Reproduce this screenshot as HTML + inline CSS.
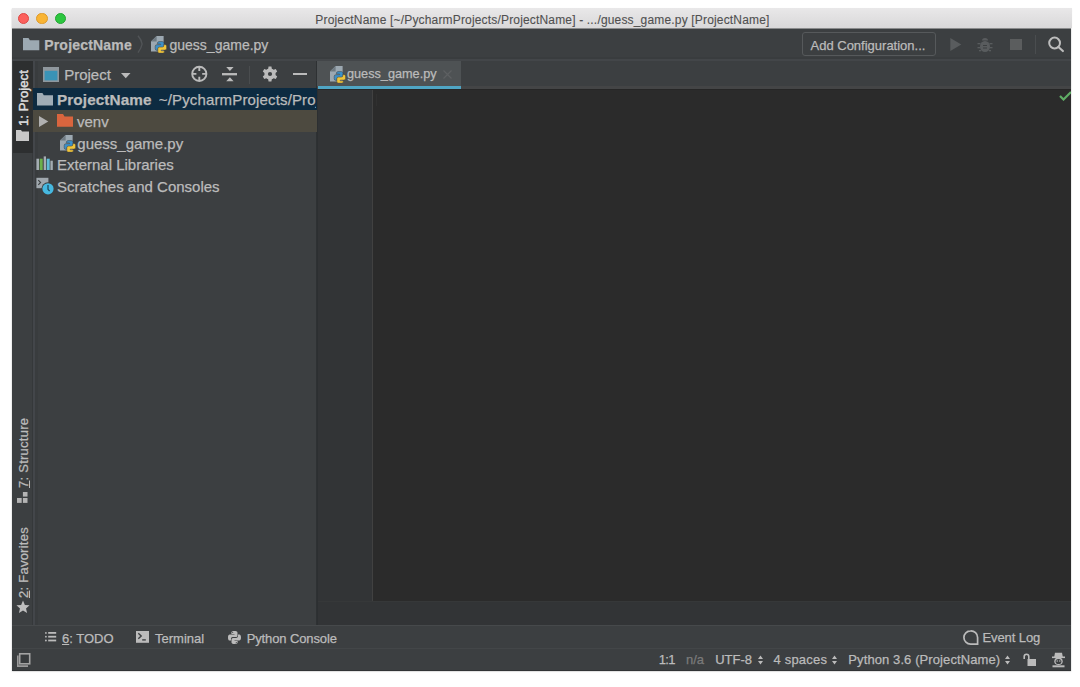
<!DOCTYPE html>
<html><head><meta charset="utf-8">
<style>
*{box-sizing:border-box;margin:0;padding:0}
html,body{width:1080px;height:687px;background:#fff;overflow:hidden;font-family:"Liberation Sans",sans-serif;position:relative}
.a{position:absolute}
.t{position:absolute;white-space:nowrap;color:#bbbbbb;-webkit-text-stroke:0.25px currentColor}
.s13{font-size:13px;line-height:15px}
.s15{font-size:15px;line-height:17px}
.s14{font-size:14px;line-height:16px}
svg{position:absolute;overflow:visible}
</style></head><body>
<svg width="0" height="0" style="position:absolute"><defs><symbol id="py" viewBox="0 0 16 17"><path d="M5.6 0H12.6V15.6H0V5.6Z" fill="#9ca8b1"/><path d="M0 5.6L5.6 0V5.6Z" fill="#6f7a82"/><path d="M8 5.6h3.3a1.7 1.7 0 0 1 1.7 1.7V10a1.7 1.7 0 0 1-1.7 1.7H8.6a1.7 1.7 0 0 0-1.7 1.7V14.4H5.9A1.7 1.7 0 0 1 4.2 12.7V10.4A1.7 1.7 0 0 1 5.9 8.7H9.6V8H6.4V7.3A1.7 1.7 0 0 1 8 5.6Z" fill="#3d90c8" stroke="#3c3f41" stroke-width="0.5"/><path transform="rotate(180 9.9 11.4)" d="M8 5.6h3.3a1.7 1.7 0 0 1 1.7 1.7V10a1.7 1.7 0 0 1-1.7 1.7H8.6a1.7 1.7 0 0 0-1.7 1.7V14.4H5.9A1.7 1.7 0 0 1 4.2 12.7V10.4A1.7 1.7 0 0 1 5.9 8.7H9.6V8H6.4V7.3A1.7 1.7 0 0 1 8 5.6Z" fill="#f0c53a" stroke="#3c3f41" stroke-width="0.5"/></symbol></defs></svg>
<!-- window frame -->
<div class="a" style="left:12px;top:8px;width:1058.7px;height:663px;background:#3c3f41;box-shadow:0 0.5px 1.5px rgba(0,0,0,.3)"></div>
<!-- title bar -->
<div class="a" style="left:11.5px;top:7.9px;width:1060.3px;height:20.1px;background:linear-gradient(#e9e8e9,#d9d8d9);box-shadow:0 0 0.6px rgba(0,0,0,.12)"></div>
<div class="a" style="left:18.3px;top:13.2px;width:11.2px;height:11.2px;border-radius:50%;background:#fc605c;border:0.5px solid #df4744"></div>
<div class="a" style="left:36.4px;top:13.2px;width:11.2px;height:11.2px;border-radius:50%;background:#f9b434;border:0.5px solid #de9a2a"></div>
<div class="a" style="left:54.5px;top:13.2px;width:11.2px;height:11.2px;border-radius:50%;background:#2cc63f;border:0.6px solid #23a532"></div>
<div class="t" style="left:315.3px;top:12.9px;font-size:12px;line-height:14px;letter-spacing:0.17px;color:#505050;-webkit-text-stroke:0.1px #505050">ProjectName [~/PycharmProjects/ProjectName] - .../guess_game.py [ProjectName]</div>

<!-- breadcrumb bar -->
<div class="a" style="left:12px;top:28px;width:1058.7px;height:33px;background:#3c3f41"></div><div class="a" style="left:12px;top:28px;width:1058.7px;height:1px;background:#8a8b8c"></div><div class="a" style="left:12px;top:57px;width:1058.7px;height:1.8px;background:#393c3e"></div><div class="a" style="left:12px;top:58.9px;width:1058.7px;height:2.1px;background:#434649"></div>
<svg style="left:22.9px;top:37.9px" width="16.3" height="12.2" viewBox="0 0 16.3 12.2"><path d="M0 0H5.5L6.9 2.2H16.3V12.2H0Z" fill="#9ca9b2"/></svg>
<div class="t s14" style="left:44.2px;top:36.5px;font-weight:bold;letter-spacing:0.2px">ProjectName</div>
<svg style="left:136.5px;top:35px" width="7" height="18" viewBox="0 0 7 18"><path d="M1 0.8Q4.5 5 5.1 9Q4.5 13 1 17.6" fill="none" stroke="#515457" stroke-width="1.4"/></svg>
<svg style="left:151px;top:35.5px" width="16" height="17"><use href="#py"/></svg>
<div class="t s14" style="left:169.5px;top:36.5px">guess_game.py</div>

<!-- Add configuration + run icons -->
<div class="a" style="left:802px;top:32px;width:133.5px;height:24px;border:1.5px solid #56595b;border-radius:3px;background:#3c3f41"></div>
<div class="t s13" style="left:810.5px;top:37.5px">Add Configuration...</div>
<svg style="left:950px;top:38px" width="11.5" height="13" viewBox="0 0 11.5 13"><path d="M0.3 0L11.3 6.5L0.3 13Z" fill="#595c5e"/></svg>
<svg style="left:977px;top:36.5px" width="16" height="16" viewBox="0 0 16 16"><g fill="#595c5e"><ellipse cx="8" cy="9.5" rx="5" ry="5.5"/><path d="M5 3.5a3 2.5 0 0 1 6 0z"/><rect x="0.5" y="6" width="3" height="1.3"/><rect x="12.5" y="6" width="3" height="1.3"/><rect x="0.5" y="10" width="3" height="1.3"/><rect x="12.5" y="10" width="3" height="1.3"/><rect x="2" y="13" width="2" height="1.3"/><rect x="12" y="13" width="2" height="1.3"/></g><path d="M6 8.5h4M6 11h4" stroke="#3c3f41" stroke-width="1"/></svg>
<div class="a" style="left:1010.4px;top:38.5px;width:12px;height:11.8px;background:#5b5d5e"></div>
<div class="a" style="left:1035px;top:35px;width:1px;height:19px;background:#4a4d4f"></div>
<svg style="left:1047px;top:36px" width="18" height="17" viewBox="0 0 18 17"><circle cx="7.6" cy="7" r="5.4" fill="none" stroke="#bdbdbd" stroke-width="2"/><path d="M11.4 10.9L15.9 15.1" stroke="#bdbdbd" stroke-width="2.1" stroke-linecap="round"/></svg>

<!-- left stripe -->
<div class="a" style="left:12px;top:61px;width:21px;height:564px;background:#3c3f41;border-right:1px solid #35383a"></div>
<div class="a" style="left:12.5px;top:60.5px;width:20px;height:92.5px;background:#2d2f30"></div>
<div class="t s13" style="left:16.3px;top:125.8px;transform-origin:0 0;transform:rotate(-90deg);color:#dcdcdc;letter-spacing:0.1px;-webkit-text-stroke:0.45px #dcdcdc">1: Project</div>
<svg style="left:16px;top:130px" width="13" height="11" viewBox="0 0 13 11"><path d="M0 0H5L6 1.5H13V11H0Z" fill="#c8c8c8"/></svg>
<div class="t s13" style="left:16.2px;top:487.5px;transform-origin:0 0;transform:rotate(-90deg);letter-spacing:0.25px"><span style="text-decoration:underline">7</span>: Structure</div>
<svg style="left:17px;top:492px" width="11" height="11" viewBox="0 0 11 11"><g fill="#b4b4b4"><rect x="5.9" y="0" width="4.6" height="4.6"/><rect x="0" y="6" width="4.7" height="4.9"/><rect x="5.9" y="6" width="4.6" height="4.9"/></g></svg>
<div class="t s13" style="left:16.2px;top:597.5px;transform-origin:0 0;transform:rotate(-90deg);letter-spacing:0.25px"><span style="text-decoration:underline">2</span>: Favorites</div>
<svg style="left:15.6px;top:599.6px" width="14" height="14" viewBox="0 0 24 24"><path d="M12 1l3.2 7.4 8 .7-6 5.3 1.8 7.9L12 18.2 5 22.3l1.8-7.9-6-5.3 8-.7z" fill="#bfbfbf"/></svg>

<!-- project panel -->
<div class="a" style="left:33px;top:61px;width:284px;height:564px;background:#3c3f41;border-right:1.5px solid #2e3133"></div><div class="a" style="left:33px;top:61px;width:2.2px;height:564px;background:#43464a"></div><div class="a" style="left:35.2px;top:61px;width:2.6px;height:564px;background:#393c3e"></div>
<!-- project toolbar -->
<svg style="left:43.3px;top:67.1px" width="16" height="15" viewBox="0 0 16 15"><rect x="0" y="0" width="16" height="15" fill="#8f979d"/><rect x="1.6" y="3.8" width="12.8" height="9.6" fill="#3a93b6"/></svg>
<div class="t s15" style="left:64.2px;top:65.8px">Project</div>
<svg style="left:120.8px;top:73px" width="9.5" height="6" viewBox="0 0 9.5 6"><path d="M0 0H9.5L4.75 5.2Z" fill="#bbbbbb"/></svg>
<svg style="left:190px;top:65px" width="18" height="18" viewBox="0 0 18 18"><circle cx="9.3" cy="8.9" r="7.1" fill="none" stroke="#bbbbbb" stroke-width="1.9"/><path d="M9.3 1.8V6M9.3 11.8V16M2.2 8.9H6.4M12.2 8.9H16.4" stroke="#bbbbbb" stroke-width="1.9"/></svg>
<svg style="left:222px;top:66px" width="15" height="16" viewBox="0 0 15 16"><path d="M0 8.2H15" stroke="#bbbbbb" stroke-width="2.3"/><path d="M4.2 1H11.6L7.9 5.1Z M4.2 15.2H11.6L7.9 11.3Z" fill="#bbbbbb"/></svg>
<div class="a" style="left:249px;top:66px;width:1px;height:18px;background:#4a4d4f"></div>
<svg style="left:261.7px;top:66.1px" width="16" height="16" viewBox="0 0 16 16"><path d="M6.18 2.71 L6.55 0.54 L9.45 0.54 L9.82 2.71 L11.67 3.77 L13.74 3.01 L15.19 5.53 L13.50 6.93 L13.50 9.07 L15.19 10.47 L13.74 12.99 L11.67 12.23 L9.82 13.29 L9.45 15.46 L6.55 15.46 L6.18 13.29 L4.33 12.23 L2.26 12.99 L0.81 10.47 L2.50 9.07 L2.50 6.93 L0.81 5.53 L2.26 3.01 L4.33 3.77Z" fill="#bbbbbb"/><circle cx="8" cy="8" r="5.2" fill="#bbbbbb"/><circle cx="8" cy="8" r="2.1" fill="#3c3f41"/></svg>
<div class="a" style="left:293.2px;top:73px;width:14.3px;height:2.4px;background:#bbbbbb"></div>

<!-- tree -->
<div class="a" style="left:33px;top:88px;width:284px;height:22px;background:#0d2b41"></div>
<div class="a" style="left:33px;top:110px;width:284px;height:21.5px;background:#4d4a40"></div>
<svg style="left:36.9px;top:92.5px" width="16" height="12.5" viewBox="0 0 16 12.5"><path d="M0 0H5.4L6.8 2.2H16V12.5H0Z" fill="#a0adb6"/></svg>
<div class="t s15" style="left:57px;top:90.9px;font-size:15.3px;font-weight:bold;letter-spacing:0.1px">ProjectName</div>
<div class="t s15" style="left:158.8px;top:91px;overflow:hidden;width:157.6px;letter-spacing:0.15px">~/PycharmProjects/ProjectName</div>
<svg style="left:38.8px;top:115.6px" width="9.3" height="11" viewBox="0 0 9.3 11"><path d="M0 0L9.3 5.5L0 11Z" fill="#b0b0b0"/></svg>
<svg style="left:57.4px;top:114px" width="16" height="13" viewBox="0 0 16 13"><path d="M0 0H6L7.5 2.4H16V12.8H0Z" fill="#d9653e"/></svg>
<div class="t s15" style="left:77px;top:112.8px">venv</div>
<svg style="left:60px;top:134.5px" width="16" height="17"><use href="#py"/></svg>
<div class="t s15" style="left:77.3px;top:134.6px">guess_game.py</div>
<svg style="left:36px;top:156px" width="17" height="15" viewBox="0 0 17 15"><rect x="0.4" y="2.7" width="2.6" height="11.3" fill="#a5adb3"/><rect x="3.7" y="2.7" width="3" height="11.3" fill="#6cb04b"/><rect x="7.7" y="0.4" width="2.3" height="13.6" fill="#a5adb3"/><rect x="10.7" y="2.7" width="3" height="11.3" fill="#5fbcd8"/><rect x="14.4" y="4.7" width="2.4" height="9.3" fill="#a5adb3"/></svg>
<div class="t s15" style="left:57px;top:156.1px">External Libraries</div>
<svg style="left:36px;top:177px" width="19" height="19" viewBox="0 0 19 19"><rect x="0.4" y="0.8" width="12" height="10.4" fill="#a0a8ae"/><path d="M2.3 3.2L4.6 5.5L2.3 7.8" stroke="#3c3f41" stroke-width="1.1" fill="none"/><circle cx="12" cy="11.8" r="6.6" fill="#3c3f41"/><circle cx="12" cy="11.8" r="5.6" fill="#46b8e0"/><path d="M12 8V12.3L13.6 14" stroke="#1d4456" stroke-width="1.2" fill="none"/></svg>
<div class="t s15" style="left:57px;top:177.5px">Scratches and Consoles</div>

<!-- editor area -->
<div class="a" style="left:317px;top:61px;width:753.7px;height:25px;background:#3c3f41"></div>
<div class="a" style="left:317px;top:61px;width:144px;height:25px;background:#4e5254"></div>
<div class="a" style="left:317px;top:86px;width:754px;height:2.5px;background:#444546"></div><div class="a" style="left:317px;top:88.5px;width:754px;height:1px;background:#262626"></div><div class="a" style="left:317.5px;top:86px;width:143.5px;height:3px;background:#4fa5c4"></div>
<svg style="left:330px;top:66px" width="16" height="17"><use href="#py"/></svg>
<div class="t" style="left:347px;top:66.5px;font-size:12.7px;line-height:15px">guess_game.py</div>
<svg style="left:443px;top:70px" width="9" height="9" viewBox="0 0 9 9"><path d="M0.5 0.5L8.5 8.5M8.5 0.5L0.5 8.5" stroke="#5d6062" stroke-width="1.2"/></svg>
<div class="a" style="left:317px;top:89.5px;width:55px;height:511px;background:#323436"></div>
<div class="a" style="left:371.5px;top:89.5px;width:1px;height:511px;background:#414141"></div>
<div class="a" style="left:372.5px;top:89.5px;width:698.5px;height:511px;background:#2b2b2b"></div>
<div class="a" style="left:376px;top:94px;width:1px;height:12px;background:#303030"></div>
<svg style="left:1058.5px;top:91px;overflow:hidden" width="12.5" height="10" viewBox="0 0 12.5 10"><path d="M1 5L4.5 8.5L12 1" fill="none" stroke="#5fad65" stroke-width="2.2"/></svg>
<div class="a" style="left:317px;top:600.5px;width:754px;height:24px;background:#323436;border-top:1.5px solid #363839"></div><div class="a" style="left:316.6px;top:88.5px;width:1.9px;height:536px;background:#2c2f31"></div>

<!-- bottom tool window bar -->
<div class="a" style="left:12px;top:625px;width:1058.7px;height:23px;background:#3c3f41;border-top:1px solid #46494b"></div>
<svg style="left:45.2px;top:632.4px" width="11.2" height="9.4" viewBox="0 0 11.2 9.4"><g fill="#bbbbbb"><circle cx="0.9" cy="0.9" r="0.9"/><rect x="3.2" y="0" width="8" height="1.8"/><circle cx="0.9" cy="4.7" r="0.9"/><rect x="3.2" y="3.8" width="8" height="1.8"/><circle cx="0.9" cy="8.5" r="0.9"/><rect x="3.2" y="7.6" width="8" height="1.8"/></g></svg>
<div class="t s13" style="left:62px;top:630.6px"><span style="text-decoration:underline">6</span>: TODO</div>
<svg style="left:135.9px;top:631px" width="13" height="11.8" viewBox="0 0 13 11.8"><rect x="0" y="0" width="13" height="11.8" fill="#bbbbbb"/><path d="M2.3 2.3L5.2 5L2.3 7.7" stroke="#3c3f41" stroke-width="1.4" fill="none"/><rect x="6.2" y="8.2" width="3.6" height="1.4" fill="#3c3f41"/></svg>
<div class="t s13" style="left:155px;top:630.6px">Terminal</div>
<svg style="left:228px;top:631px" width="13" height="13" viewBox="0 0 13 13"><path fill="#bbbbbb" d="M6.4 0C3.2 0 3.4 1.4 3.4 1.4V2.9H6.5V3.4H2.1S0 3.1 0 6.4s1.8 3.1 1.8 3.1H3V7.9s-.1-1.8 1.8-1.8h3s1.7 0 1.7-1.7V1.7S9.8 0 6.4 0zM4.7 .9a.55.55 0 1 1 0 1.1.55.55 0 0 1 0-1.1z"/><path fill="#bbbbbb" d="M6.6 13c3.2 0 3-1.4 3-1.4V10.1H6.5V9.6h4.4S13 9.9 13 6.6s-1.8-3.1-1.8-3.1H10v1.6s.1 1.8-1.8 1.8h-3s-1.7 0-1.7 1.7v2.7S3.2 13 6.6 13zm1.7-.9a.55.55 0 1 1 0-1.1.55.55 0 0 1 0 1.1z"/></svg>
<div class="t s13" style="left:246.7px;top:630.6px;letter-spacing:-0.12px">Python Console</div>
<svg style="left:962.8px;top:629.8px" width="16" height="15" viewBox="0 0 16 15"><path d="M7.6 0.9A6.7 6.6 0 1 0 7.6 14.1H14.6V7.5A6.7 6.6 0 0 0 7.6 0.9Z" fill="none" stroke="#bbbbbb" stroke-width="1.7"/></svg>
<div class="t s13" style="left:982.5px;top:630.3px;letter-spacing:-0.1px">Event Log</div>

<!-- status bar -->
<div class="a" style="left:12px;top:648px;width:1058.7px;height:23px;background:#3c3f41;border-top:1px solid #434648;border-bottom:1.5px solid #303335"></div>
<svg style="left:17.2px;top:652.8px" width="14" height="14" viewBox="0 0 14 14"><rect x="2.7" y="0.8" width="10" height="10" fill="#383b3d" stroke="#a3a3a3" stroke-width="1.6"/><path d="M0.8 2.6V13.1H11" fill="none" stroke="#9a9a9a" stroke-width="1.6"/></svg>
<div class="t s13" style="left:658.8px;top:652px;letter-spacing:-0.7px">1:1</div>
<div class="t s13" style="left:686px;top:652px;color:#7a7a7a">n/a</div>
<div class="t s13" style="left:715.2px;top:652px">UTF-8</div>
<svg style="left:758px;top:655px" width="5" height="10" viewBox="0 0 5 10"><path d="M0 4H5L2.5 0.5Z M0 6H5L2.5 9.5Z" fill="#bbbbbb"/></svg>
<div class="t s13" style="left:773.5px;top:652px;letter-spacing:0.2px">4 spaces</div>
<svg style="left:832px;top:655px" width="5" height="10" viewBox="0 0 5 10"><path d="M0 4H5L2.5 0.5Z M0 6H5L2.5 9.5Z" fill="#bbbbbb"/></svg>
<div class="t s13" style="left:848.3px;top:652px;letter-spacing:0.1px">Python 3.6 (ProjectName)</div>
<svg style="left:1005px;top:655px" width="5" height="10" viewBox="0 0 5 10"><path d="M0 4H5L2.5 0.5Z M0 6H5L2.5 9.5Z" fill="#bbbbbb"/></svg>
<svg style="left:1023px;top:653px" width="13" height="13" viewBox="0 0 13 13"><path d="M1.2 6V3.5a2.3 2.3 0 0 1 4.6 0V6" fill="none" stroke="#bbbbbb" stroke-width="1.6"/><rect x="4.5" y="6" width="8.5" height="7" fill="#bbbbbb"/></svg>
<svg style="left:1051px;top:651.5px" width="15" height="16" viewBox="0 0 15 16"><g fill="#bbbbbb"><path d="M4 0.8H11L11.8 5H3.2Z"/><rect x="1" y="4.5" width="13" height="1.6"/><ellipse cx="7.5" cy="9.3" rx="4.2" ry="3.8"/><rect x="1.5" y="13.3" width="12" height="2"/></g><ellipse cx="7.5" cy="9.5" rx="2.9" ry="2.6" fill="#3c3f41"/><circle cx="6.2" cy="8.9" r="0.75" fill="#bbbbbb"/><circle cx="8.8" cy="8.9" r="0.75" fill="#bbbbbb"/></svg>
</body></html>
